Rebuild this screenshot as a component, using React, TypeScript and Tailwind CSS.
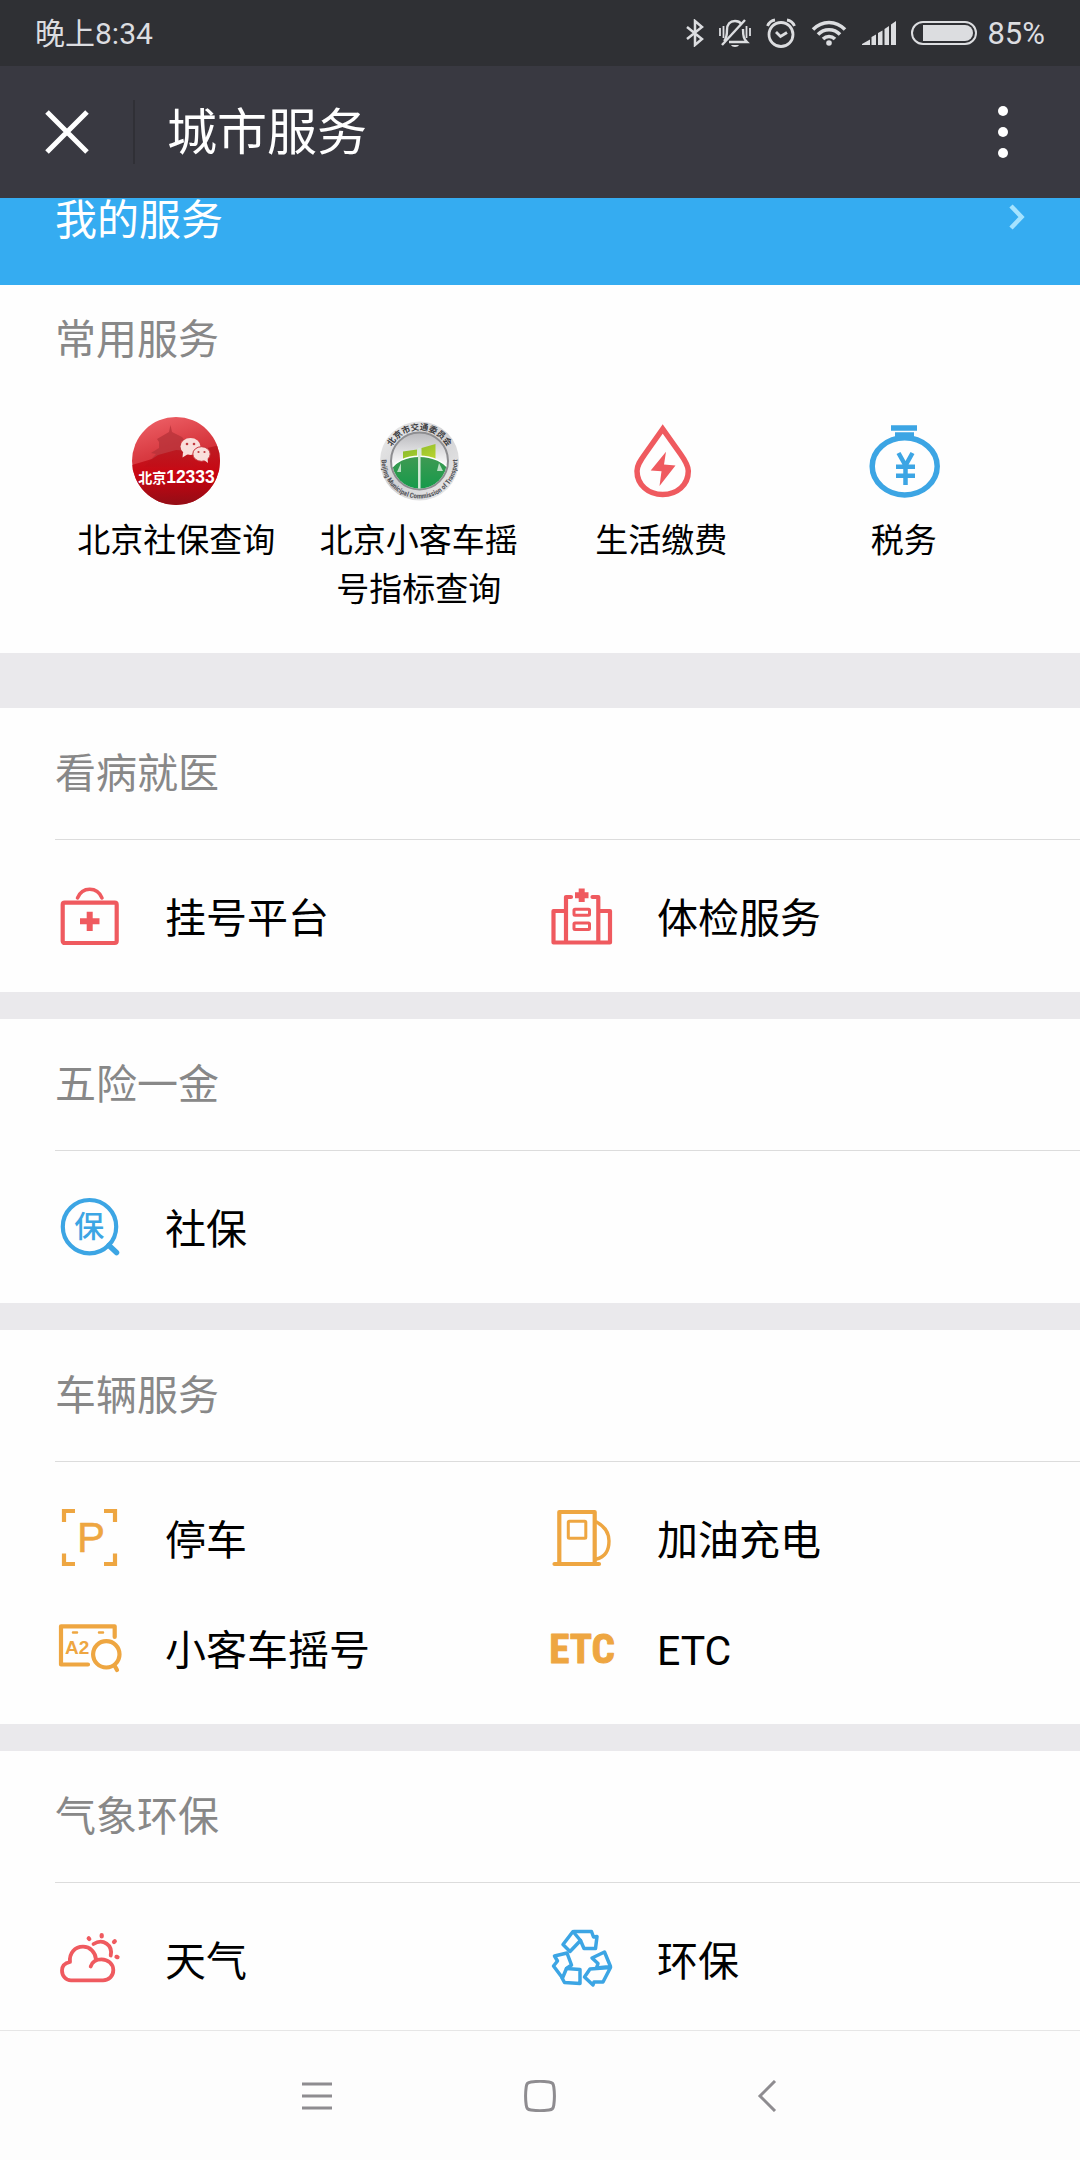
import React from 'react';

const RED = '#ef5a5f';
const BLUE = '#3ca5e4';
const ORANGE = '#eea641';

type Service = { name: string; icon: React.ReactNode };

function Icon({ color, children }: { color: string; children: React.ReactNode }) {
  return (
    <svg viewBox="0 0 68 68" className="w-[68px] h-[68px] shrink-0" fill="none" stroke={color} strokeWidth="4.2" strokeLinecap="round" strokeLinejoin="round" aria-hidden="true">
      {children}
    </svg>
  );
}

const commonServices: Service[] = [
  { name: '北京社保查询', icon: <SocialSecurityLogo /> },
  { name: '北京小客车摇号指标查询', icon: <TransportLogo /> },
  {
    name: '生活缴费',
    icon: (
      <svg viewBox="0 0 88 88" className="w-[88px] h-[88px]" aria-hidden="true">
        <path d="M45.700 12 L28 37 C23 44 20 48.500 20 54 C20 68 31.500 77.500 45.700 77.500 C60 77.500 71.300 68 71.300 54 C71.300 48.500 68.500 44 63.500 37 Z" fill="none" stroke={RED} strokeWidth="5.5" />
        <path d="M49 34.7 L33.7 53.5 L44.5 54.3 L42.5 69 L58.5 48.5 L47 47.5 Z" fill={RED} />
      </svg>
    ),
  },
  {
    name: '税务',
    icon: (
      <svg viewBox="0 0 88 88" className="w-[88px] h-[88px]" fill="none" stroke={BLUE} aria-hidden="true">
        <ellipse cx="44.7" cy="49.3" rx="32.5" ry="28.6" strokeWidth="5.500" />
        <path d="M31 11 H57 M35 18 H54" strokeWidth="5.5" />
        <path d="M38.500 36 L45.500 48.500 L52.500 36 M36 49.700 H55 M36 58.700 H55 M45.500 47 V68" strokeWidth="4.5" />
      </svg>
    ),
  },
];

const sections: { title: string; items: Service[] }[] = [
  {
    title: '看病就医',
    items: [
      {
        name: '挂号平台',
        icon: (
          <Icon color={RED}>
            <rect x="7.7" y="20.700" width="54" height="40.300" rx="2" />
            <path d="M22.500 16 C25 10 29.500 7.300 34.700 7.300 S44.500 10 47 16" strokeWidth="3.500" />
            <path d="M34.7 29.700 V49 M25 39.300 H44.500" strokeWidth="6" strokeLinecap="butt" />
          </Icon>
        ),
      },
      {
        name: '体检服务',
        icon: (
          <Icon color={RED}>
            <path d="M24 15 H19 V60.500 H51.300 V15 H45.500 M19 29 H6.500 V60.500 H19 M51.300 29 H63 V60.500 H51.300" />
            <rect x="27" y="27.300" width="15.500" height="6" rx="1" strokeWidth="3" />
            <rect x="27" y="41" width="15.500" height="6.500" rx="1" strokeWidth="3" />
            <path d="M34.700 6.500 V20 M28 13.300 H41.500" strokeWidth="6" strokeLinecap="butt" />
          </Icon>
        ),
      },
    ],
  },
  {
    title: '五险一金',
    items: [
      {
        name: '社保',
        icon: (
          <Icon color={BLUE}>
            <circle cx="34.5" cy="33.7" r="26.7" />
            <path d="M54 52.500 L61.500 59.500" strokeWidth="5.500" />
            <text x="34.300" y="44" textAnchor="middle" fontSize="30" fontWeight="500" fill={BLUE} stroke="none">保</text>
          </Icon>
        ),
      },
    ],
  },
  {
    title: '车辆服务',
    items: [
      {
        name: '停车',
        icon: (
          <Icon color={ORANGE}>
            <path d="M20 7 H9 V18 M49 7 H60 V18 M9 49.500 V60 H20 M60 49.500 V60 H49" strokeLinecap="butt" strokeLinejoin="miter" />
            <text x="22" y="48.300" fontSize="42" fill={ORANGE} stroke={ORANGE} strokeWidth="0.500" className="font-['Liberation_Sans',sans-serif]">P</text>
          </Icon>
        ),
      },
      {
        name: '加油充电',
        icon: (
          <Icon color={ORANGE}>
            <path d="M12.300 59 V8 H47.700 V59" />
            <path d="M7.500 60 H52" />
            <rect x="21.300" y="17.300" width="17.500" height="17" rx="1" strokeWidth="3" />
            <path d="M49.500 18 C57 22 62 29 62 37 C62 46 58 53 49.500 55" strokeWidth="3.400" />
          </Icon>
        ),
      },
      {
        name: '小客车摇号',
        icon: (
          <Icon color={ORANGE}>
            <path d="M59.700 23 V12.300 H6 V50.500 H33" />
            <path d="M18 18.500 H22 M44 18.500 H48" strokeWidth="2.500" />
            <text x="10" y="40" fontSize="19" fontWeight="700" fill={ORANGE} stroke="none" className="font-['Liberation_Sans',sans-serif]">A2</text>
            <circle cx="51.300" cy="40.300" r="13.200" fill="#fff" />
            <path d="M59.500 51.500 L62 56" />
          </Icon>
        ),
      },
      {
        name: 'ETC',
        icon: (
          <Icon color={ORANGE}>
            <text x="35" y="49" textAnchor="middle" fontSize="41" fontWeight="700" fill={ORANGE} strokeWidth="1" className="font-['Roboto_Condensed','Liberation_Sans_Narrow',Roboto,sans-serif]">ETC</text>
          </Icon>
        ),
      },
    ],
  },
  {
    title: '气象环保',
    items: [
      {
        name: '天气',
        icon: (
          <Icon color={RED}>
            <path d="M41 34.500 C40.500 27 35 21.700 28 21.700 C20 21.700 14 28 15 37 C10 38 7 41 7 45.500 C7 51 11 55.300 16 55.300 H48 C54 55.300 58.300 51 58.300 45 C58.300 39 53 34.300 46.500 34.300 C41 34.300 37 37 35.700 41.500" strokeWidth="3.800" />
            <path d="M38.500 19 C48 13 58 20 55.700 30.500" strokeWidth="3.800" />
            <path d="M33.700 13.300 L34.300 14 M46.700 10 V11.500 M59.800 16.200 L59 17 M61.500 31.800 L62.500 32.200" />
          </Icon>
        ),
      },
      {
        name: '环保',
        icon: (
          <Icon color={BLUE}>
            <g strokeWidth="3.500">
              <path d="M26 6.500 L16 19.500 L23 26.500 L33.500 15.500 Z" />
              <path d="M27 6.500 H44.500 L46.500 12 L50 11.500 L48.500 23.500 H37 L33.500 15.500" />
              <path d="M7.500 31 L20 28 L24.500 40 L19.500 43.500 L15.500 53 L6.500 41 L10.500 36 Z" />
              <path d="M19.500 43.500 L33 44.500 V58.500 L17.500 57.500 L15 53" />
              <path d="M45 33 L57.500 27 L63.500 41.500 L49.500 43 L51 38.500 Z" />
              <path d="M43 44 L37.500 52 L46 60 L47 57 H56 L63.500 42.500 Z" />
            </g>
          </Icon>
        ),
      },
    ],
  },
];

export default function App() {
  return (
    <div className="min-h-screen flex flex-col bg-[#eae9ec] text-black font-[Roboto,'Noto_Sans_CJK_SC',sans-serif]">
      <StatusBar />

      <header className="h-[132px] shrink-0 bg-[#393941] text-white flex items-center">
        <button type="button" aria-label="关闭" className="w-[133px] h-16 flex items-center justify-center">
          <svg viewBox="0 0 44 44" className="w-[44px] h-[44px]" stroke="currentColor" strokeWidth="5" aria-hidden="true">
            <path d="M2 2 L42 42 M42 2 L2 42" />
          </svg>
        </button>
        <div className="w-[2px] h-16 bg-[#303036]" />
        <h1 className="flex-1 pl-8 pt-[2px] text-[50px] leading-[64px]">城市服务</h1>
        <button type="button" aria-label="更多" className="w-[154px] h-16 flex flex-col items-center justify-center gap-[11px]">
          <span className="w-[10px] h-[10px] rounded-full bg-white" />
          <span className="w-[10px] h-[10px] rounded-full bg-white" />
          <span className="w-[10px] h-[10px] rounded-full bg-white" />
        </button>
      </header>

      {/* My services, scrolled partly under the header */}
      <a href="#my" className="h-[87px] shrink-0 bg-[#35acf1] text-white flex items-start justify-between px-[55px]">
        <span className="text-[42px] leading-[46px]">我的服务</span>
        <svg viewBox="0 0 16 38" className="w-[16px] h-[38px]" fill="none" stroke="#a5e3ff" strokeWidth="4.500" aria-hidden="true">
          <path d="M2 8 L12.500 19 L2 30" />
        </svg>
      </a>

      <main className="flex-1 flex flex-col gap-[27px]">
        <section className="bg-[#fefefe] pt-[25px] pb-[39px] mb-7 px-[55px]">
          <h2 className="text-[41px] leading-[60px] text-[#888]">常用服务</h2>
          <div className="grid grid-cols-4 mt-[47px]">
            {commonServices.map(s => (
              <a key={s.name} href="#service" className="flex flex-col items-center gap-[11px]">
                {s.icon}
                <span className="max-w-[204px] text-center text-[33px] leading-[49px]">{s.name}</span>
              </a>
            ))}
          </div>
        </section>

        {sections.map(section => (
          <section key={section.title} className="group bg-[#fefefe] pl-[55px] last:flex-1">
            <h2 className="h-[132px] flex items-center border-b border-[#dcdcdc] text-[41px] leading-[60px] text-[#888]">{section.title}</h2>
            <div className="grid grid-cols-2 pt-[21px] pb-[21px] pr-[41px] group-last:pb-4">
              {section.items.map(item => (
                <a key={item.name} href="#service" className="h-[110px] flex items-center gap-[42px]">
                  {item.icon}
                  <span className="pt-[6px] text-[41px] leading-[60px]">{item.name}</span>
                </a>
              ))}
            </div>
          </section>
        ))}
      </main>

      <nav className="h-[130px] shrink-0 bg-[#fdfdfd] border-t border-[#e6e6e6] flex items-center justify-center gap-32 text-[#8e8c90]">
        <button type="button" aria-label="菜单" className="w-24 h-16 flex items-center justify-center">
          <svg viewBox="0 0 32 32" className="w-8 h-8" stroke="currentColor" strokeWidth="3" aria-hidden="true">
            <path d="M2 4 H32 M2 16 H32 M2 28 H32" />
          </svg>
        </button>
        <button type="button" aria-label="主页" className="w-24 h-16 flex items-center justify-center">
          <svg viewBox="0 0 32 32" className="w-8 h-8" fill="none" stroke="currentColor" strokeWidth="3" aria-hidden="true">
            <path d="M7 2 C12 1.300 20 1.300 25 2 C28.500 2.500 29.300 3.500 29.800 7 C30.500 12 30.500 20 29.800 25 C29.300 28.500 28.500 29.500 25 30 C20 30.700 12 30.700 7 30 C3.500 29.500 2.700 28.500 2.200 25 C1.500 20 1.500 12 2.200 7 C2.700 3.500 3.500 2.500 7 2 Z" />
          </svg>
        </button>
        <button type="button" aria-label="返回" className="w-24 h-16 flex items-center justify-center">
          <svg viewBox="0 0 32 32" className="w-8 h-8" fill="none" stroke="currentColor" strokeWidth="3" aria-hidden="true">
            <path d="M27 1 L12 16 L27 31" />
          </svg>
        </button>
      </nav>
    </div>
  );
}

function StatusBar() {
  return (
    <div className="h-[66px] shrink-0 bg-[#2f3034] text-[#dcdde0] flex items-center justify-between px-[35px] leading-[40px]">
      <span className="pt-[2px] text-[30px]">晚上8:34</span>
      <div className="flex items-center gap-[15px]">
        <svg viewBox="0 0 18 28" className="w-[18px] h-[28px]" fill="none" stroke="currentColor" strokeWidth="2.500" aria-hidden="true">
          <path d="M1 8 L16 20 L9 26 V2 L16 8 L1 20" />
        </svg>
        <svg viewBox="0 0 32 32" className="w-[32px] h-[32px]" fill="none" stroke="currentColor" strokeWidth="2.400" aria-hidden="true">
          <path d="M5 24 C7 22 8 20 8 13 C8 7 11 4 16 4 C19 4 21 5 22.500 7 M24 12 C24 20 25 22 28 25 H10" />
          <path d="M26 3 L3 28" />
          <path d="M12 28 H20 C19 30.500 13 30.500 12 28 Z" fill="currentColor" stroke="none" />
          <path d="M1 11 V19 M4.500 9 V21 M27.500 9 V21 M31 11 V19" strokeWidth="1.800" />
        </svg>
        <svg viewBox="0 0 30 30" className="w-[30px] h-[30px]" fill="none" stroke="currentColor" strokeWidth="2.800" aria-hidden="true">
          <circle cx="15" cy="16.500" r="12" />
          <path d="M10 14 L14.500 18.500 L21 14.500 M1.500 8 C3 4.500 5.500 2.500 9 2 M28.500 8 C27 4.500 24.500 2.500 21 2" />
        </svg>
        <svg viewBox="0 0 36 28" className="w-[36px] h-[28px]" fill="none" stroke="currentColor" strokeWidth="3.500" aria-hidden="true">
          <path d="M2 10.500 C11 1 25 1 34 10.500 M7 15.500 C13 9 23 9 29 15.500 M12 20 C15.500 16.500 20.500 16.500 24 20" />
          <circle cx="18" cy="24" r="2.800" fill="currentColor" stroke="none" />
        </svg>
        <svg viewBox="0 0 34 26" className="w-[34px] h-[26px]" fill="currentColor" aria-hidden="true">
          <path d="M0 25 V24 L8 19.500 V25 Z M9.500 25 V17 L14 14.500 V25 Z M16 25 V13 L20.500 10.500 V25 Z M22.500 25 V9 L27 6 V25 Z M29 25 V4.500 L34 1 V25 Z" />
        </svg>
        <div className="flex items-center gap-[10px]">
          <svg viewBox="0 0 66 26" className="w-[66px] h-[26px]" aria-hidden="true">
            <rect x="1" y="2" width="64" height="22" rx="11" fill="none" stroke="currentColor" strokeWidth="2" />
            <path d="M12 5 H54 A8 8 0 0 1 54 21 H12 Z" fill="currentColor" />
          </svg>
          <span className="pt-[2px] text-[31px]">85%</span>
        </div>
      </div>
    </div>
  );
}

function SocialSecurityLogo() {
  return (
    <svg viewBox="0 0 88 88" className="w-[88px] h-[88px]" role="img" aria-label="北京12333">
      <defs>
        <linearGradient id="ssBg" x1="0" y1="0" x2="0.300" y2="1">
          <stop offset="0" stopColor="#f0656b" />
          <stop offset="0.450" stopColor="#d93b42" />
          <stop offset="1" stopColor="#c4101a" />
        </linearGradient>
        <linearGradient id="ssWall" x1="0" y1="0" x2="0" y2="1">
          <stop offset="0" stopColor="#b81920" />
          <stop offset="0.500" stopColor="#c8000c" />
          <stop offset="1" stopColor="#8a0d16" />
        </linearGradient>
        <clipPath id="ssClip"><circle cx="44" cy="44" r="44" /></clipPath>
      </defs>
      <g clipPath="url(#ssClip)">
        <rect width="88" height="88" fill="url(#ssBg)" />
        <path d="M38.500 8 L40 15 L50 20 L53 24 H49 V27 L58 32 L62 37 H56 V43 L66 50 H12 L24 37 L19 36 L27 31 V25 L25 22 L37 15 Z" fill="#b53238" opacity="0.750" />
        <path d="M0 48 L20 42 L26 38 L44 33 L62 34 L88 28 V88 H0 Z" fill="url(#ssWall)" opacity="0.850" />
      </g>
      <g fill="#f9dfdc">
        <ellipse cx="58.500" cy="29.500" rx="10" ry="8.500" />
        <path d="M51 35 L50.500 40.500 L56 37 Z" />
        <ellipse cx="69.500" cy="37" rx="8.700" ry="7.300" stroke="#c8323a" strokeWidth="1" />
        <path d="M72 43 L76 46 L75.500 41 Z" />
      </g>
      <g fill="#c23a40">
        <circle cx="55" cy="27" r="1.300" /><circle cx="62" cy="27" r="1.300" />
        <circle cx="66.500" cy="35" r="1.100" /><circle cx="72.500" cy="35" r="1.100" />
      </g>
      <text x="44.500" y="66" textAnchor="middle" fill="#fff" fontWeight="700" className="font-['Liberation_Sans','Noto_Sans_CJK_SC',sans-serif]">
        <tspan fontSize="14">北京</tspan><tspan fontSize="17.500">12333</tspan>
      </text>
    </svg>
  );
}

function TransportLogo() {
  return (
    <svg viewBox="0 0 88 88" className="w-[88px] h-[88px]" role="img" aria-label="北京市交通委员会">
      <defs>
        <linearGradient id="tpRim" x1="0" y1="0" x2="1" y2="1">
          <stop offset="0" stopColor="#ececec" />
          <stop offset="0.500" stopColor="#d2d2d4" />
          <stop offset="1" stopColor="#eeeeee" />
        </linearGradient>
        <linearGradient id="tpSky" x1="0" y1="0" x2="0" y2="1">
          <stop offset="0" stopColor="#b9b9bd" />
          <stop offset="0.600" stopColor="#ffffff" />
        </linearGradient>
        <linearGradient id="tpLime" x1="0" y1="0" x2="1" y2="1">
          <stop offset="0" stopColor="#7fb62c" />
          <stop offset="1" stopColor="#bfd62f" />
        </linearGradient>
        <linearGradient id="tpGreen" x1="0" y1="0" x2="0" y2="1">
          <stop offset="0" stopColor="#3f9a53" />
          <stop offset="1" stopColor="#0c9a48" />
        </linearGradient>
        <clipPath id="tpClip"><circle cx="44.500" cy="44" r="27.500" /></clipPath>
        <path id="tpTop" d="M13.500 44 A31 31 0 0 1 75.500 44" />
        <path id="tpBottom" d="M8 33 A38 38 0 1 0 81 33" />
      </defs>
      <circle cx="44.500" cy="44" r="39.500" fill="url(#tpRim)" />
      <circle cx="44.500" cy="44" r="28.500" fill="url(#tpSky)" stroke="#8d8d90" strokeWidth="2" />
      <g clipPath="url(#tpClip)">
        <path d="M28 34.500 L42 32.500 V41 L28 43.500 Z M46.500 31 L60.500 27 V43 L46.500 41 Z" fill="url(#tpLime)" />
        <path d="M14 55 C24 34 64 34 76 55 V80 H14 Z" fill="url(#tpGreen)" stroke="#fff" strokeWidth="1.300" />
        <path d="M44.300 31 V74" stroke="#d5ead8" strokeWidth="2.500" />
        <path d="M22 55 L26 46 V55 Z M62 54 L64 46 L68 54 Z" fill="#b9dec2" />
      </g>
      <text fontSize="8.500" fontWeight="700" fill="#3c3c40" textAnchor="middle">
        <textPath href="#tpTop" startOffset="50%">北京市交通委员会</textPath>
      </text>
      <text fontSize="7" fontWeight="700" fill="#55555a" textAnchor="middle" className="font-['Roboto_Condensed','Liberation_Sans_Narrow',sans-serif]">
        <textPath href="#tpBottom" startOffset="50%">Beijing Municipal Commission of Transport</textPath>
      </text>
    </svg>
  );
}
